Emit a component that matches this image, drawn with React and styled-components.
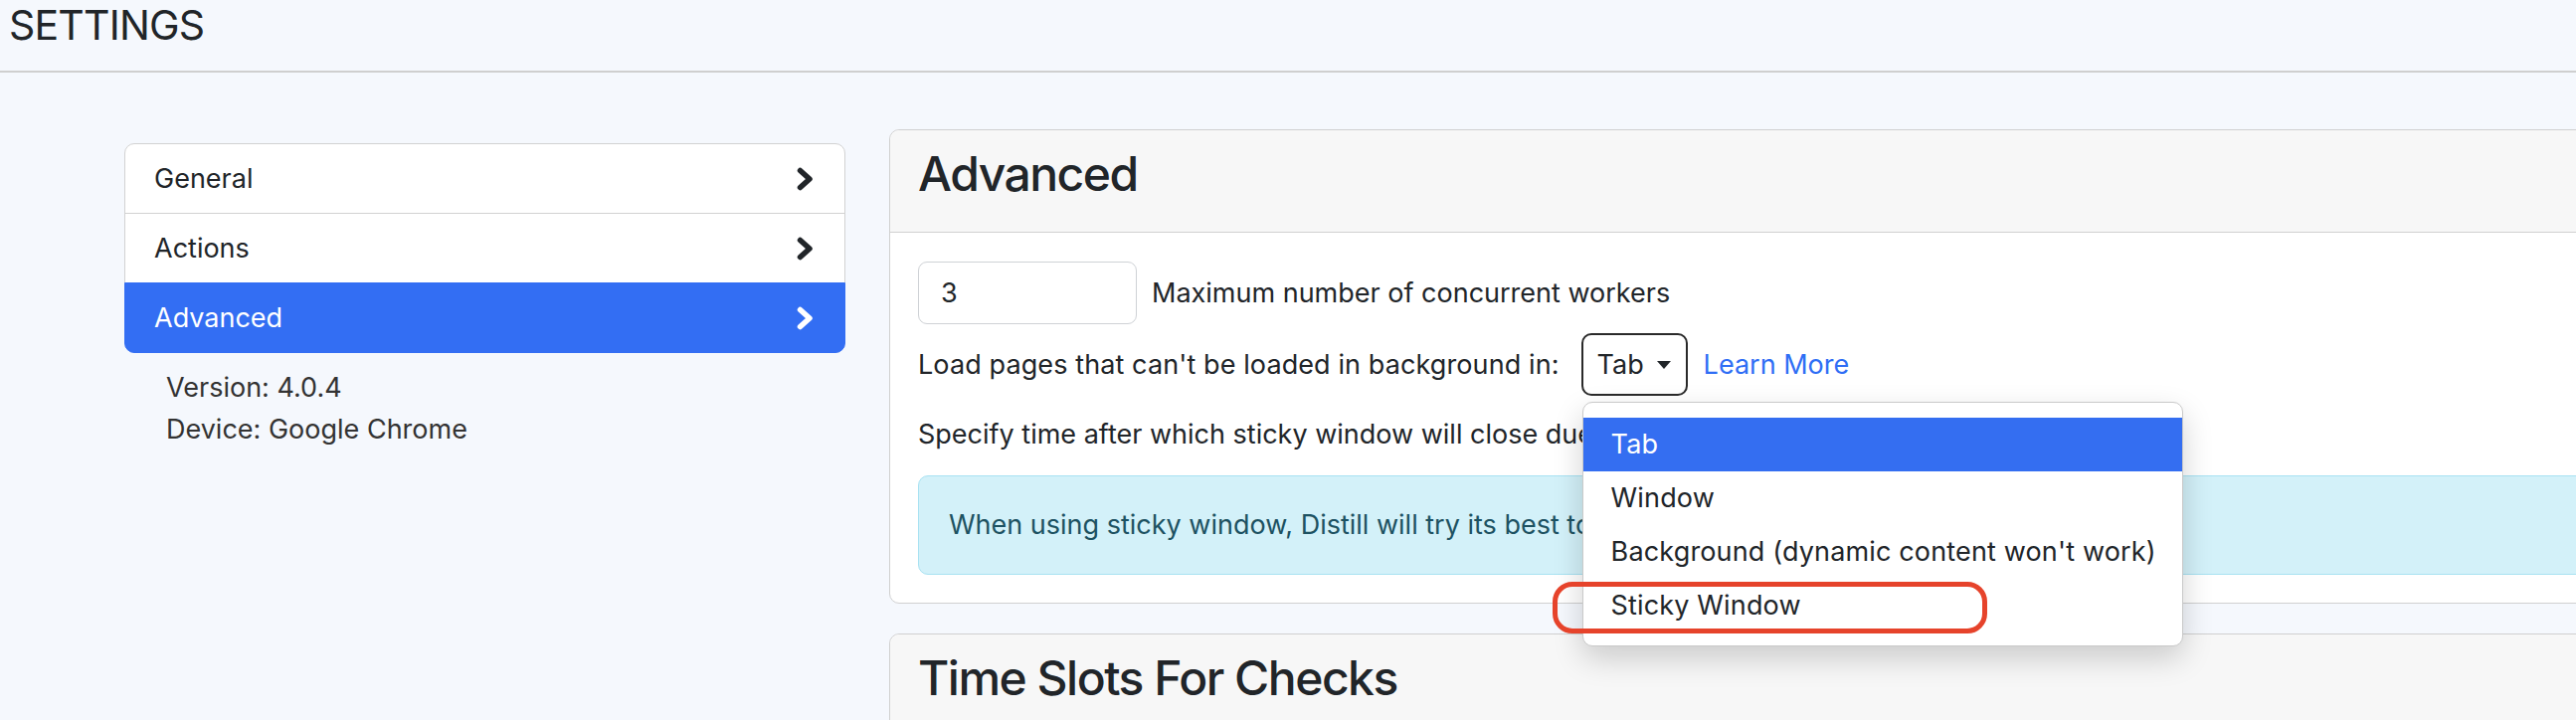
import React from "react"
import styled, { createGlobalStyle } from "styled-components"

const GlobalStyle = createGlobalStyle`
    html, body {
        margin: 0;
        padding: 0;
        overflow: hidden;
        background: #f5f8fd;
    }
    body {
        font-family: Inter, "Liberation Sans", Arial, sans-serif;
        font-size: 27px;
        line-height: 42px;
        color: #212529;
    }
    * { box-sizing: border-box; }
`

const Chevron = ({ color }) => (
    <svg width="17" height="24" viewBox="0 0 17 24">
        <polyline points="3.5,3.5 13,12 3.5,20.5" fill="none" stroke={color} strokeWidth="5.5" strokeLinecap="round" strokeLinejoin="round" />
    </svg>
)

const menu = ["Tab", "Window", "Background (dynamic content won't work)", "Sticky Window"]

const App = () => (
    <>
        <GlobalStyle />
        <TopBar>
            <Title>SETTINGS</Title>
        </TopBar>
        <Layout>
            <Sidebar>
                <NavList>
                    <NavItem>General <Chevron color="#212529" /></NavItem>
                    <NavItem>Actions <Chevron color="#212529" /></NavItem>
                    <NavItem $active>Advanced <Chevron color="#fff" /></NavItem>
                </NavList>
                <Meta>
                    <div>Version: 4.0.4</div>
                    <div>Device: Google Chrome</div>
                </Meta>
            </Sidebar>
            <Main>
                <Card>
                    <CardHeader><CardTitle>Advanced</CardTitle></CardHeader>
                    <CardBody>
                        <Row>
                            <NumberInput type="text" defaultValue="3" />
                            <span>Maximum number of concurrent workers</span>
                        </Row>
                        <Row $top={9}>
                            <Label>Load pages that can't be loaded in background in:</Label>
                            <SelectWrap>
                                <SelectBox>Tab <Caret /></SelectBox>
                                <Menu>
                                    {menu.map((m, i) => (
                                        <Option key={m} $selected={i === 0}>
                                            {m}
                                            {m === "Sticky Window" && <Ring />}
                                        </Option>
                                    ))}
                                </Menu>
                            </SelectWrap>
                            <LearnMore href="#">Learn More</LearnMore>
                        </Row>
                        <Line>Specify time after which sticky window will close due to inactivity:</Line>
                        <Alert>When using sticky window, Distill will try its best to keep it out of your way.</Alert>
                    </CardBody>
                </Card>
                <Card $gap>
                    <CardHeader><CardTitle>Time Slots For Checks</CardTitle></CardHeader>
                    <CardBody />
                </Card>
            </Main>
        </Layout>
    </>
)

const TopBar = styled.header`
    height: 73px;
    padding: 5px 9px 0;
    border-bottom: 2px solid #cfcfcf;
`
const Title = styled.h1`
    margin: 0;
    font-size: 41px;
    line-height: 40px;
    font-weight: 400;
    letter-spacing: -0.8px;
`
const Layout = styled.div`
    display: flex;
    gap: 44px;
    padding: 57px 0 0 125px;
`
const Sidebar = styled.aside`
    width: 725px;
    flex-shrink: 0;
    margin-top: 14px;
`
const NavList = styled.ul`
    list-style: none;
    margin: 0;
    padding: 0;
`
const NavItem = styled.li`
    display: flex;
    align-items: center;
    justify-content: space-between;
    padding: 13.5px 31px 13.5px 29px;
    background: ${p => (p.$active ? "#336ef3" : "#fff")};
    color: ${p => (p.$active ? "#fff" : "#212529")};
    border: 1px solid ${p => (p.$active ? "#336ef3" : "#d2d2d2")};
    &:first-child {
        border-radius: 10px 10px 0 0;
    }
    & + & {
        border-top-width: ${p => (p.$active ? "1px" : "0")};
        margin-top: ${p => (p.$active ? "-1px" : "0")};
    }
    &:last-child {
        border-radius: 0 0 10px 10px;
    }
`
const Meta = styled.div`
    margin-top: 14px;
    padding-left: 42px;
    color: #333;
`
const Main = styled.main`
    width: 1760px;
    flex-shrink: 0;
`
const Card = styled.section`
    background: #fff;
    border: 1px solid #d0d0d0;
    border-radius: 10px;
    margin-top: ${p => (p.$gap ? "30px" : "0")};
`
const CardHeader = styled.div`
    background: #f7f7f7;
    padding: 14px 28px;
    border-bottom: 1px solid #d0d0d0;
    border-radius: 10px 10px 0 0;
`
const CardTitle = styled.h3`
    margin: 0 0 14px;
    font-size: 48px;
    line-height: 60px;
    font-weight: 500;
    letter-spacing: -1.5px;
`
const CardBody = styled.div`
    padding: 29px 28px 28px;
`
const Row = styled.div`
    display: flex;
    align-items: center;
    gap: 15px;
    margin-top: ${p => (p.$top ? `${p.$top}px` : "0")};
`
const Label = styled.span`
    margin-right: 7px;
    letter-spacing: 0.1px;
`
const NumberInput = styled.input`
    width: 220px;
    height: 63px;
    padding: 0 22px;
    font: inherit;
    color: #212529;
    background: #fff;
    border: 1px solid #cfd2d6;
    border-radius: 9px;
    outline: none;
`
const SelectWrap = styled.div`
    position: relative;
`
const SelectBox = styled.div`
    width: 107px;
    height: 63px;
    display: flex;
    align-items: center;
    justify-content: space-between;
    padding: 0 15px 0 14px;
    border: 2px solid #2a2a2a;
    border-radius: 10px;
    background: #fff;
`
const Caret = styled.span`
    width: 0;
    height: 0;
    border-left: 7.5px solid transparent;
    border-right: 7.5px solid transparent;
    border-top: 8px solid #212529;
`
const Menu = styled.ul`
    position: absolute;
    top: calc(100% + 6px);
    left: 1px;
    width: 604px;
    margin: 0;
    padding: 15px 0 13px;
    list-style: none;
    background: #fff;
    border: 1px solid #c9c9c9;
    border-radius: 10px;
    box-shadow: 0 12px 30px rgba(0, 0, 0, 0.18);
    z-index: 10;
`
const Option = styled.li`
    position: relative;
    height: 54px;
    line-height: 54px;
    padding-left: 28px;
    white-space: nowrap;
    letter-spacing: 0.15px;
    background: ${p => (p.$selected ? "#346ef1" : "transparent")};
    color: ${p => (p.$selected ? "#fff" : "#212529")};
`
const Ring = styled.span`
    position: absolute;
    left: -31px;
    top: 3px;
    width: 437px;
    height: 52px;
    border: 5px solid #e6432b;
    border-radius: 20px;
`
const LearnMore = styled.a`
    color: #2f6ef5;
    text-decoration: none;
    margin-left: 1px;
`
const Line = styled.div`
    margin-top: 18px;
    white-space: nowrap;
`
const Alert = styled.div`
    margin-top: 20px;
    padding: 28px 30px;
    background: #d3f1f9;
    border: 1px solid #a8e2f2;
    border-radius: 10px;
    color: #1d5262;
`

export default App
